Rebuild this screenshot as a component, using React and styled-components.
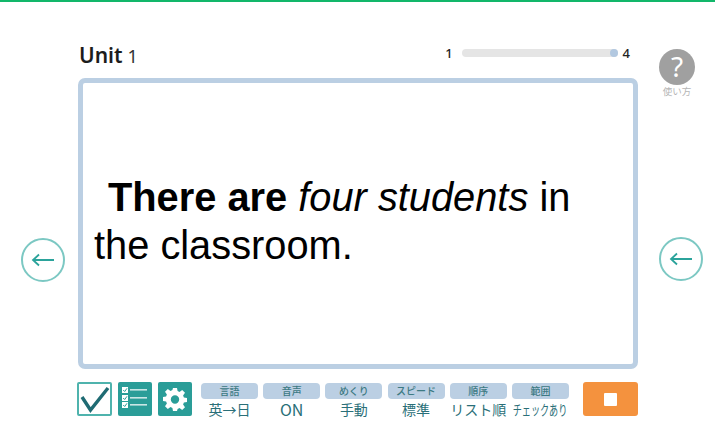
import React from 'react';
import styled, { createGlobalStyle } from 'styled-components';

const GlobalStyle = createGlobalStyle`
  html, body {
    margin: 0;
    padding: 0;
    background: #fff;
    overflow: hidden;
  }
  body {
    font-family: "Noto Sans CJK JP", "Noto Sans", sans-serif;
  }
`;

const settings = [
  { label: '言語', value: '英→日' },
  { label: '音声', value: 'ON', wide: true },
  { label: 'めくり', value: '手動' },
  { label: 'スピード', value: '標準' },
  { label: '順序', value: 'リスト順' },
  { label: '範囲', value: 'チェックあり', narrow: true },
];

const App = () => {
  return (
    <Page>
      <GlobalStyle />
      <LeftColumn>
        <ArrowButton>
          <ArrowIcon />
        </ArrowButton>
      </LeftColumn>
      <Main>
        <Header>
          <UnitTitle>
            Unit<UnitNumber>1</UnitNumber>
          </UnitTitle>
          <Progress>
            <ProgressNum>1</ProgressNum>
            <ProgressTrack>
              <ProgressDot />
            </ProgressTrack>
            <ProgressNum>4</ProgressNum>
          </Progress>
        </Header>
        <Card>
          <Sentence>
            <b>There are</b> <i>four students</i> in the classroom.
          </Sentence>
        </Card>
        <Toolbar>
          <CheckBox>
            <svg width="30" height="28" viewBox="0 0 30 28">
              <path d="M2 12 L10.500 25 L28 3" fill="none" stroke="#1f6b73" strokeWidth="3.4" />
            </svg>
          </CheckBox>
          <TealButton>
            <ListIcon />
          </TealButton>
          <TealButton>
            <GearIcon />
          </TealButton>
          <Settings>
            {settings.map((s) => (
              <Setting key={s.label}>
                <SettingLabel>{s.label}</SettingLabel>
                <SettingValue $wide={s.wide} $narrow={s.narrow}>{s.value}</SettingValue>
              </Setting>
            ))}
          </Settings>
          <StopButton>
            <StopSquare />
          </StopButton>
        </Toolbar>
      </Main>
      <RightColumn>
        <Help>
          <HelpCircle>?</HelpCircle>
          <HelpLabel>使い方</HelpLabel>
        </Help>
        <RightArrow>
          <ArrowIcon />
        </RightArrow>
      </RightColumn>
    </Page>
  );
};

export default App;

const ArrowIcon = () => (
  <svg width="24" height="14" viewBox="0 0 24 14">
    <path d="M23 7 H3" stroke="#2ba39b" strokeWidth="2" fill="none" />
    <path d="M8 1.500 L2 7 L8 12.500" stroke="#2ba39b" strokeWidth="1.800" fill="none" />
  </svg>
);

const ListIcon = () => (
  <svg width="30" height="30" viewBox="0 0 30 30">
    {[3, 11, 18].map((y) => (
      <g key={y}>
        <rect x="2" y={y} width="6" height="6" fill="#fff" />
        <path d={`M3.200 ${y + 3} L4.700 ${y + 4.500} L7 ${y + 1.300}`} stroke="#2a9d98" strokeWidth="1" fill="none" />
        <rect x="10" y={y + 2} width="17" height="1.600" fill="#fff" opacity="0.75" />
      </g>
    ))}
  </svg>
);

const GearIcon = () => (
  <svg width="24" height="24" viewBox="0 0 24 24">
    <path
      fill="#fff"
      fillRule="evenodd"
      d="M10 1h4l.6 3.100 1.900.8L19.200 3 22 5.800l-1.900 2.700.8 1.900L24 11v4l-3.100.5-.8 1.900 1.900 2.800-2.800 2.800-2.700-1.900-1.900.8L14 24h-4l-.6-3.100-1.900-.8L4.800 22 2 19.200l1.900-2.700-.8-1.900L0 14v-4l3.100-.6.8-1.900L2 4.800 4.800 2l2.700 1.900 1.900-.8z M12 8.300a4.200 4.200 0 1 0 0 8.400 4.200 4.200 0 0 0 0-8.400z"
    />
  </svg>
);

const Page = styled.div`
  box-sizing: border-box;
  width: 715px;
  height: 425px;
  border-top: 2px solid #12b76a;
  display: grid;
  grid-template-columns: 78px 560px 77px;
`;

const LeftColumn = styled.div`
  display: flex;
  justify-content: center;
  padding: 236px 0 0 8px;
  box-sizing: border-box;
`;

const ArrowButton = styled.div`
  box-sizing: border-box;
  width: 44px;
  height: 44px;
  border: 2px solid #7cc8c3;
  border-radius: 50%;
  display: flex;
  align-items: center;
  justify-content: center;
`;

const RightArrow = styled(ArrowButton)`
  margin-top: 140px;
`;

const Main = styled.div`
  display: flex;
  flex-direction: column;
`;

const Header = styled.div`
  height: 76px;
  display: flex;
  justify-content: space-between;
  align-items: flex-start;
`;

const UnitTitle = styled.div`
  margin: 40px 0 0 1px;
  font-family: "Noto Sans", sans-serif;
  font-size: 21px;
  line-height: 26px;
  font-weight: 600;
  color: #1c1c1c;
`;

const UnitNumber = styled.span`
  margin-left: 5px;
  font-size: 18px;
  font-weight: 400;
  color: #333;
`;

const Progress = styled.div`
  margin: 43px 8px 0 0;
  display: flex;
  align-items: center;
  gap: 5px;
`;

const ProgressNum = styled.span`
  font-family: "Noto Sans", sans-serif;
  font-size: 13px;
  line-height: 16px;
  font-weight: 500;
  color: #222;
`;

const ProgressTrack = styled.div`
  position: relative;
  width: 156px;
  height: 8px;
  margin-left: 4px;
  border-radius: 4px;
  background: #e5e5e5;
`;

const ProgressDot = styled.div`
  position: absolute;
  right: 0;
  top: 0;
  width: 8px;
  height: 8px;
  border-radius: 50%;
  background: #b2c8e0;
`;

const Card = styled.div`
  box-sizing: border-box;
  width: 560px;
  height: 291px;
  border: 5px solid #bbcfe3;
  border-radius: 7px;
  display: flex;
  align-items: center;
  padding: 0 40px 6px 11px;
  background: #fff;
`;

const Sentence = styled.div`
  font-family: "Liberation Sans", Arial, sans-serif;
  font-size: 39.8px;
  line-height: 48px;
  text-indent: 14px;
  color: #000;
`;

const Toolbar = styled.div`
  margin-top: 13px;
  margin-left: -1px;
  display: flex;
  align-items: flex-start;
  gap: 6px;
`;

const CheckBox = styled.div`
  box-sizing: border-box;
  width: 35px;
  height: 34px;
  border: 2px solid #4fb3ad;
  display: flex;
  align-items: center;
  justify-content: center;
  border-radius: 2px;
`;

const TealButton = styled.div`
  width: 34px;
  height: 34px;
  background: #2a9d98;
  border-radius: 2px;
  display: flex;
  align-items: center;
  justify-content: center;
`;

const Settings = styled.div`
  display: flex;
  gap: 5.2px;
  margin-left: 3px;
`;

const Setting = styled.div`
  width: 57px;
  display: flex;
  flex-direction: column;
  align-items: center;
  margin-top: 1px;
`;

const SettingLabel = styled.div`
  width: 100%;
  height: 16px;
  line-height: 16px;
  border-radius: 4px;
  background: #bbcfe3;
  text-align: center;
  font-size: 10px;
  font-weight: 500;
  color: #3d7a83;
`;

const SettingValue = styled.div`
  margin-top: 1px;
  white-space: nowrap;
  line-height: 18px;
  font-size: ${(props) => (props.$wide ? '16px' : '14px')};
  color: #2a6f78;
  transform: ${(props) => (props.$narrow ? 'scaleX(0.65)' : 'none')};
`;

const StopButton = styled.div`
  margin-left: 8px;
  width: 55px;
  height: 34px;
  background: #f4923e;
  border-radius: 3px;
  display: flex;
  align-items: center;
  justify-content: center;
`;

const StopSquare = styled.div`
  width: 13px;
  height: 13px;
  background: #fff;
  border-radius: 1px;
`;

const RightColumn = styled.div`
  display: flex;
  flex-direction: column;
  align-items: flex-start;
  padding: 47px 0 0 21px;
`;

const Help = styled.div`
  display: flex;
  flex-direction: column;
  align-items: center;
  width: 36px;
`;

const HelpCircle = styled.div`
  width: 36px;
  height: 36px;
  border-radius: 50%;
  background: #a0a0a0;
  color: #fff;
  text-align: center;
  font-family: "Noto Sans", sans-serif;
  font-size: 28px;
  line-height: 35px;
`;

const HelpLabel = styled.div`
  font-size: 9.5px;
  line-height: 12px;
  white-space: nowrap;
  color: #b5b5b5;
`;
